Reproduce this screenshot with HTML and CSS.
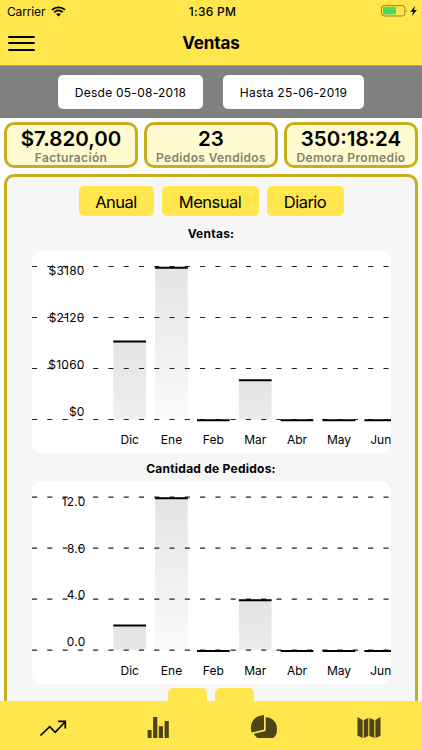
FILE: index.html
```html
<!DOCTYPE html>
<html lang="es">
<head>
    <meta charset="UTF-8">
    <meta name="viewport" content="width=device-width, initial-scale=1.0">
    <title>Ventas</title>
    <link rel="stylesheet" href="styles.css">
</head>
<body>
    <div class="screen">
        <header class="header">
            <div class="status-bar">
                <div class="carrier">
                    <span>Carrier</span>
                    <svg width="15" height="11" viewBox="0 0 15 11">
                        <path d="M1 3.9 C4.6 .5 10.4 .5 14 3.9 M3.3 6.2 C5.7 4 9.3 4 11.7 6.2" fill="none" stroke="#000" stroke-width="1.9"/>
                        <path d="M7.5 10.6 L5.1 8.1 C6.5 6.9 8.5 6.9 9.9 8.1 Z"/>
                    </svg>
                </div>
                <span class="time">1:36 PM</span>
                <div class="battery">
                    <svg width="37" height="12" viewBox="0 0 37 12">
                        <rect x=".5" y=".6" width="23.4" height="10.4" rx="2.6" fill="none" stroke="#8f8432"/>
                        <rect x="2" y="2.1" width="13" height="7.4" rx="1" fill="#4cd964"/>
                        <path d="M25.1 4 Q26.6 5.8 25.1 7.6 Z" fill="#8f8432"/>
                        <path d="M34.3 .8 L29.3 6.7 H32.2 L30.7 11.2 L35.8 5.1 H32.9 Z"/>
                    </svg>
                </div>
            </div>
            <div class="nav-bar">
                <div class="menu-icon"><i></i><i></i><i></i></div>
                <h1>Ventas</h1>
            </div>
        </header>

        <div class="dates">
            <button class="date-btn from">Desde 05-08-2018</button>
            <button class="date-btn to">Hasta 25-06-2019</button>
        </div>

        <main class="content">
            <div class="cards">
                <div class="card"><strong>$7.820,00</strong><span>Facturación</span></div>
                <div class="card"><strong>23</strong><span>Pedidos Vendidos</span></div>
                <div class="card"><strong>350:18:24</strong><span>Demora Promedio</span></div>
            </div>

            <section class="panel">
                <div class="periods">
                    <button class="annual">Anual</button>
                    <button class="monthly">Mensual</button>
                    <button class="daily">Diario</button>
                </div>

                <h2>Ventas:</h2>
                <svg class="chart" viewBox="0 0 359 203">
                    <defs>
                        <linearGradient id="dic1" gradientUnits="userSpaceOnUse" x1="0" y1="90" x2="0" y2="253">
                            <stop offset="0" stop-color="#e4e4e4"/><stop offset="1" stop-color="#fbfbfb"/>
                        </linearGradient>
                        <linearGradient id="ene" gradientUnits="userSpaceOnUse" x1="0" y1="16" x2="0" y2="169">
                            <stop offset="0" stop-color="#e4e4e4"/><stop offset="1" stop-color="#fafafa"/>
                        </linearGradient>
                        <linearGradient id="mar1" gradientUnits="userSpaceOnUse" x1="0" y1="128" x2="0" y2="290">
                            <stop offset="0" stop-color="#e4e4e4"/><stop offset="1" stop-color="#fbfbfb"/>
                        </linearGradient>
                    </defs>
                    <rect x="81.3" y="90" width="32.7" height="78.5" fill="url(#dic1)"/>
                    <rect x="123.1" y="16" width="32.7" height="152.5" fill="url(#ene)"/>
                    <rect x="206.9" y="128.5" width="32.7" height="40" fill="url(#mar1)"/>
                    <path class="grid" d="M0 15.5H359 M0 66.5H359 M0 117.5H359 M0 168.5H359"/>
                    <path class="caps" d="M81.3 90.6h32.7 M123.1 16.8h32.7 M165 169.3h32.7 M206.9 129.3h32.7 M248.7 169.3h32.7 M290.6 169.3h32.7 M332.4 169.3h32.7"/>
                    <g class="y-labels">
                        <text x="52.7" y="24.4">$3180</text>
                        <text x="52.7" y="71.3">$2120</text>
                        <text x="52.7" y="118">$1060</text>
                        <text x="52.7" y="164.8">$0</text>
                    </g>
                    <g class="x-labels">
                        <text x="97.7" y="193">Dic</text>
                        <text x="139.5" y="193">Ene</text>
                        <text x="181.3" y="193">Feb</text>
                        <text x="223.2" y="193">Mar</text>
                        <text x="265" y="193">Abr</text>
                        <text x="307" y="193">May</text>
                        <text x="348.8" y="193">Jun</text>
                    </g>
                </svg>

                <h2 class="orders-title">Cantidad de Pedidos:</h2>
                <svg class="chart" viewBox="0 0 359 203">
                    <defs>
                        <linearGradient id="dic2" gradientUnits="userSpaceOnUse" x1="0" y1="143" x2="0" y2="305">
                            <stop offset="0" stop-color="#e4e4e4"/><stop offset="1" stop-color="#fbfbfb"/>
                        </linearGradient>
                        <linearGradient id="mar2" gradientUnits="userSpaceOnUse" x1="0" y1="118" x2="0" y2="280">
                            <stop offset="0" stop-color="#e4e4e4"/><stop offset="1" stop-color="#fbfbfb"/>
                        </linearGradient>
                    </defs>
                    <rect x="81.3" y="144" width="32.7" height="25" fill="url(#dic2)"/>
                    <rect x="123.1" y="16" width="32.7" height="153" fill="url(#ene)"/>
                    <rect x="206.9" y="118" width="32.7" height="51" fill="url(#mar2)"/>
                    <path class="grid" d="M0 16.2H359 M0 67.2H359 M0 118.2H359 M0 169.2H359"/>
                    <path class="caps" d="M81.3 144.4h32.7 M123.1 17.3h32.7 M165 170h32.7 M206.9 119.3h32.7 M248.7 170h32.7 M290.6 170h32.7 M332.4 170h32.7"/>
                    <g class="y-labels">
                        <text x="53.6" y="24.8">12.0</text>
                        <text x="53.6" y="71.6">8.0</text>
                        <text x="53.6" y="118.4">4.0</text>
                        <text x="53.6" y="165.2">0.0</text>
                    </g>
                    <g class="x-labels">
                        <text x="97.7" y="193.7">Dic</text>
                        <text x="139.5" y="193.7">Ene</text>
                        <text x="181.3" y="193.7">Feb</text>
                        <text x="223.2" y="193.7">Mar</text>
                        <text x="265" y="193.7">Abr</text>
                        <text x="307" y="193.7">May</text>
                        <text x="348.8" y="193.7">Jun</text>
                    </g>
                </svg>

                <div class="pager">
                    <button></button>
                    <button></button>
                </div>
            </section>
        </main>

        <nav class="tab-bar">
            <a href="#" class="active">
                <svg width="28" height="26" viewBox="0 0 28 26">
                    <path d="M1.5 20.5 L10.7 11.7 L16.2 17.3 L26 7 M19.2 6.3 H26.3 V13.5" fill="none" stroke="#000" stroke-width="1.7"/>
                </svg>
            </a>
            <a href="#">
                <svg width="28" height="26" viewBox="0 0 28 26">
                    <path d="M3.6 15h4v8h-4z M9.1 2h4.2v21H9.1z M14.8 11.2h4.2V23h-4.2z M20.6 6h4.2v17h-4.2z"/>
                </svg>
            </a>
            <a href="#">
                <svg width="28" height="26" viewBox="0 0 28 26">
                    <path d="M14 0 V14.6 L1.6 17.6 C-1.3 8.3 4.4 .4 14 0 Z"/>
                    <path d="M15.7 2.2 C22.7 2.4 27 7.3 27 13.5 C27 18 26.2 20.8 23.3 23 H7.8 C5.9 21.7 4.7 20.4 3.8 18.8 L15.7 15.9 Z"/>
                </svg>
            </a>
            <a href="#">
                <svg width="28" height="26" viewBox="0 0 28 26">
                    <path d="M2.5 2 L7.6 5 V23 L2.5 20.8 Z M8.7 5 L13.3 3 V21 L8.7 23 Z M14.4 3 L19.3 5 V23 L14.4 21 Z M20.4 5 L25.5 2 V20.8 L20.4 23 Z"/>
                </svg>
            </a>
        </nav>
    </div>
</body>
</html>
```
FILE: styles.css
```css
* {
    box-sizing: border-box;
}
body {
    margin: 0;
    font-family: Inter, "Liberation Sans", sans-serif;
    color: #000;
    background-color: #fff;
}
button {
    font-family: inherit;
    color: #000;
    border: none;
    padding: 0;
    cursor: pointer;
}
.screen {
    display: flex;
    flex-direction: column;
    height: 750px;
    overflow: hidden;
}

/* Header */
.header {
    height: 66px;
    flex-shrink: 0;
    background-color: #ffe64d;
    border-bottom: 1px solid #b9a850;
}
.status-bar {
    display: grid;
    grid-template-columns: 1fr auto 1fr;
    align-items: center;
    height: 22px;
    padding: 0 4px 0 7px;
    font-size: 12px;
}
.carrier {
    display: flex;
    align-items: center;
    gap: 6px;
    letter-spacing: -0.15px;
}
.carrier svg {
    display: block;
}
.time {
    font-weight: 500;
    letter-spacing: 0.3px;
}
.battery {
    display: flex;
    justify-content: flex-end;
}
.nav-bar {
    display: grid;
    grid-template-columns: 1fr auto 1fr;
    align-items: center;
    height: 42px;
    padding: 0 8px;
}
.menu-icon {
    display: flex;
    flex-direction: column;
    gap: 4.5px;
    width: 27px;
}
.menu-icon i {
    height: 2px;
    border-radius: 1px;
    background-color: #000;
}
h1 {
    margin: 0;
    font-size: 17px;
    font-weight: 700;
    letter-spacing: -0.1px;
}

/* Date range */
.dates {
    display: flex;
    justify-content: center;
    gap: 20px;
    height: 52px;
    flex-shrink: 0;
    padding-top: 9px;
    background-color: #808080;
}
.date-btn {
    height: 34px;
    border-radius: 5px;
    background-color: #fff;
    font-size: 12px;
    letter-spacing: 0.25px;
}
.from {
    width: 145px;
}
.to {
    width: 141px;
}

/* Totals */
.content {
    flex: 1;
    min-height: 0;
    padding: 4px 4px 0;
    overflow: hidden;
}
.cards {
    display: grid;
    grid-template-columns: repeat(3, 1fr);
    gap: 6px;
    height: 46px;
}
.card {
    display: flex;
    flex-direction: column;
    align-items: center;
    border: 3px solid #c9ae1f;
    border-radius: 10px;
    background-color: #fffad0;
    white-space: nowrap;
}
.card strong {
    margin-top: 1px;
    font-size: 20.5px;
    line-height: 25px;
    font-weight: 600;
}
.card span {
    font-size: 12px;
    line-height: 14px;
    font-weight: 600;
    letter-spacing: 0.35px;
    color: #85826c;
}

/* Charts */
.panel {
    display: flex;
    flex-direction: column;
    align-items: center;
    height: 620px;
    margin-top: 6px;
    padding-top: 9px;
    border: 3px solid #c9ae1f;
    border-radius: 10px;
    background-color: #f6f6f6;
}
.periods {
    display: flex;
    gap: 8px;
}
.periods button {
    height: 30px;
    padding-top: 2px;
    border-radius: 5px;
    background-color: #ffe64d;
    font-size: 16.5px;
    letter-spacing: -0.5px;
}
.annual {
    width: 75px;
}
.monthly {
    width: 97px;
}
.daily {
    width: 77px;
}
h2 {
    margin: 10px 0 9px;
    font-size: 12px;
    line-height: 16px;
    font-weight: 700;
    letter-spacing: 0.25px;
}
.orders-title {
    margin: 7px 0 4px;
}
.chart {
    width: 359px;
    height: 203px;
    flex-shrink: 0;
    border-radius: 10px;
    background-color: #fff;
    font-size: 12px;
}
.grid {
    fill: none;
    stroke: #222;
    stroke-width: 1.2;
    stroke-dasharray: 5.1 10.18;
}
.caps {
    stroke: #000;
    stroke-width: 2;
}
.y-labels {
    text-anchor: end;
    letter-spacing: 0.25px;
}
.x-labels {
    text-anchor: middle;
}
.pager {
    display: flex;
    gap: 8px;
    margin-top: 4px;
}
.pager button {
    width: 39px;
    height: 30px;
    border-radius: 5px;
    background-color: #ffe64d;
}

/* Tab bar */
.tab-bar {
    display: grid;
    grid-template-columns: repeat(4, 1fr);
    height: 49px;
    flex-shrink: 0;
    background-color: #ffe64d;
}
.tab-bar a {
    display: flex;
    justify-content: center;
    padding-top: 14px;
}
.tab-bar svg {
    fill: #4d4517;
}
```
